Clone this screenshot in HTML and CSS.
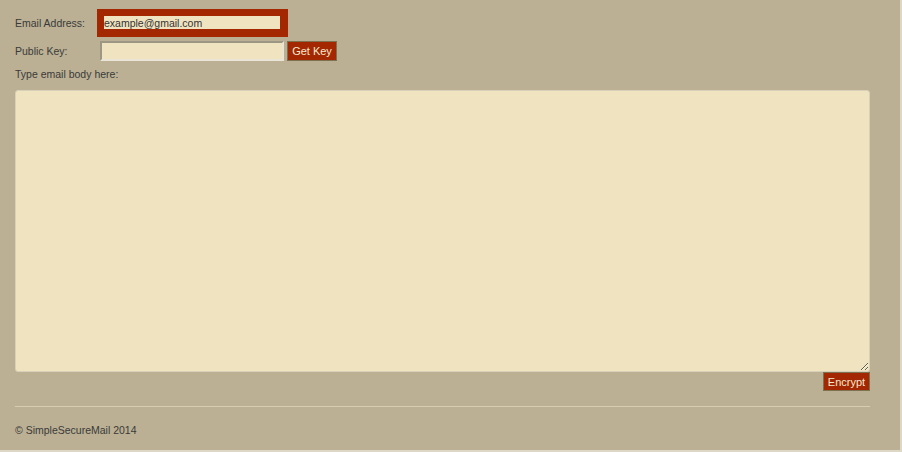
FILE: index.html
```html
<!DOCTYPE html>
<html>
<head>
<meta charset="utf-8">
<link rel="stylesheet" href="styles.css">
</head>
<body>
<div class="page">
  <div class="row row-email">
    <span class="label">Email Address:</span>
    <div class="email-box"><input class="email-input" type="text" value="example@gmail.com"></div>
  </div>
  <div class="row row-key">
    <span class="label">Public Key:</span>
    <input class="key-input" type="text">
    <button class="btn">Get Key</button>
  </div>
  <div class="body-label">Type email body here:</div>
  <textarea class="body"></textarea>
  <div class="actions"><button class="btn">Encrypt</button></div>
  <hr class="rule">
  <footer class="footer">© SimpleSecureMail 2014</footer>
</div>
</body>
</html>
```
FILE: styles.css
```css
html, body {
  margin: 0;
  padding: 0;
  background: #bbb093;
  height: 100%;
  overflow: hidden;
}
body {
  font-family: "Liberation Sans", Arial, sans-serif;
  font-size: 10.5px;
  color: #3a3a3a;
  box-shadow: inset -2px -2px 0 #dcd7c6;
}
.page {
  padding: 9px 32px 0 15px;
  width: 855px;
}
.row {
  display: flex;
  align-items: center;
}
.label {
  width: 82px;
}
.row-email {
  height: 28px;
}
.email-box {
  background: #a32700;
  padding: 7px 8px 8px 7px;
  width: 176px;
  height: 13px;
}
.email-input {
  display: block;
  width: 176px;
  height: 13px;
  box-sizing: border-box;
  border: 0;
  padding: 0;
  margin: 0;
  background: #f0e4c0;
  font-family: "Liberation Sans", Arial, sans-serif;
  font-size: 10.5px;
  color: #333;
  outline: none;
}
.row-key {
  margin-top: 4px;
  height: 20px;
}
.key-input {
  margin: 0 0 0 3px;
  width: 184px;
  height: 20px;
  box-sizing: border-box;
  border: 2px solid;
  border-color: #9c9684 #e9e4d6 #e9e4d6 #9c9684;
  background: #f0e4c0;
  padding: 0 2px;
}
.btn {
  font-family: "Liberation Sans", Arial, sans-serif;
  font-size: 11px;
  color: #f4ead0;
  background: #a32700;
  border: 1px solid #7d7150;
  padding: 0;
  height: 20px;
  margin: 0;
  white-space: nowrap;
}
.row-key .btn {
  margin-left: 3px;
  width: 50px;
}
.body-label {
  margin-top: 7px;
  height: 13px;
  line-height: 13px;
}
.body {
  display: block;
  margin-top: 9px;
  width: 855px;
  height: 282px;
  box-sizing: border-box;
  background: #f0e4c0;
  border: 1px solid #d8d0b8;
  border-radius: 3px;
  padding: 2px;
  resize: vertical;
}
.actions {
  display: flex;
  justify-content: flex-end;
}
.actions .btn {
  width: 47px;
  height: 19px;
}
.rule {
  margin: 15px 0 0;
  border: 0;
  border-top: 1px solid #d6ccb2;
  height: 0;
}
.footer {
  margin-top: 17px;
  line-height: 13px;
}
```
